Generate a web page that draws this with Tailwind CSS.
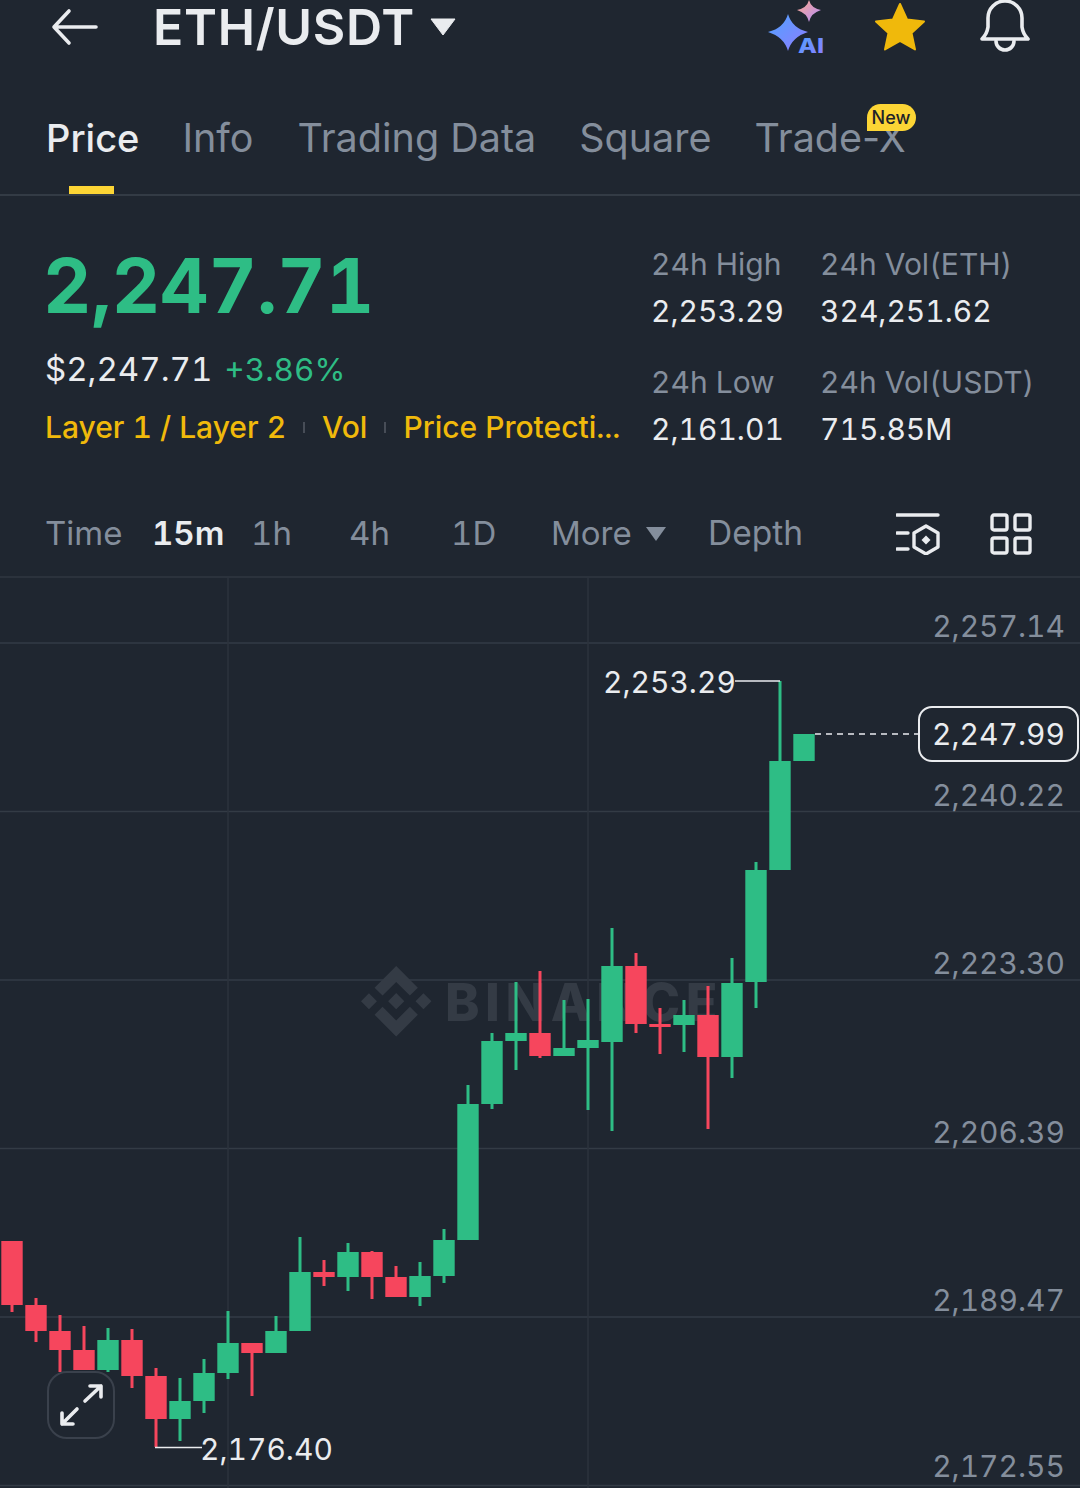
<!DOCTYPE html>
<html lang="en">
<head>
    <meta charset="UTF-8">
    <title>ETH/USDT</title>
    <script src="https://cdn.jsdelivr.net/npm/@tailwindcss/browser@4"></script>
</head>
<body class="bg-[#1f2630] font-['Inter',sans-serif] text-[#eaecef]">
<div class="w-[1080px] h-[1488px] overflow-hidden">
    <!-- Header -->
    <header class="flex items-center h-[54px] pl-[51px]">
        <svg class="w-[48px] h-[38px]" viewBox="0 0 48 38" fill="none" stroke="#eaecef" stroke-width="3.6" stroke-linecap="round" stroke-linejoin="round"><path d="M45 19H3M18 3L3 19l15 16"/></svg>
        <h1 class="ml-[54px] text-[50px] leading-[54px] font-semibold tracking-[0.7px]">ETH/USDT</h1>
        <svg class="ml-[15px] w-[26px] h-[18px]" viewBox="0 0 26 18"><path d="M1 1h24L13 17z" fill="#eaecef" stroke="#eaecef" stroke-linejoin="round"/></svg>
        <svg class="ml-[311px] w-[60px] h-[54px] overflow-visible" viewBox="0 0 60 54">
            <defs>
                <linearGradient id="aiBlue" x1="0" y1="0" x2="1" y2="1"><stop offset="0" stop-color="#4fa4ff"/><stop offset="1" stop-color="#8f7bff"/></linearGradient>
                <linearGradient id="aiPink" x1="0" y1="0" x2="1" y2="1"><stop offset="0" stop-color="#ffa98a"/><stop offset="1" stop-color="#b08cff"/></linearGradient>
            </defs>
            <path d="M21 14q4 14 20 18q-16 5-20 19q-4-14-20-19q16-4 20-18z" fill="url(#aiBlue)"/>
            <path d="M42 0q2 8 12 10q-10 3-12 12q-2-9-12-12q10-2 12-10z" fill="url(#aiPink)"/>
            <text x="31" y="53" font-family="Inter" font-weight="800" font-size="20" textLength="26" lengthAdjust="spacingAndGlyphs" fill="url(#aiBlue)">AI</text>
        </svg>
        <svg class="ml-[47px] w-[52px] h-[52px]" viewBox="0 0 52 52"><path d="M26 3l7 15.500 17 2-12.500 11.500 3.500 16.500-15-8.500-15 8.500 3.500-16.500L2 20.500l17-2z" fill="#f0b90b" stroke="#f0b90b" stroke-width="2" stroke-linejoin="round"/></svg>
        <svg class="ml-[53px] w-[52px] h-[54px]" viewBox="0 0 52 54" fill="none" stroke="#eaecef" stroke-width="3.600" stroke-linecap="round" stroke-linejoin="round"><path d="M3 39q5-5 6-12v-9a17 17 0 0 1 34 0v9q1 7 6 12z"/><path d="M17 41a9 9 0 0 0 18 0"/></svg>
    </header>

    <!-- Tabs -->
    <nav class="relative flex gap-[44px] h-[142px] pt-[58px] pl-[46px] border-b-2 border-[#333b45] text-[39.5px] leading-[52px] text-[#848e9c]">
        <div class="relative h-[82px] text-[38px] font-medium text-[#eaecef]">Price<div class="absolute left-[23px] bottom-0 w-[45px] h-[8px] bg-[#fcd535]"></div></div>
        <div class="-ml-[1px]">Info</div>
        <div>Trading Data</div>
        <div class="-ml-[1px]">Square</div>
        <div class="relative -ml-[1px]">Trade-X
            <span class="absolute left-[112px] top-[-8px] w-[49px] h-[27px] rounded-full rounded-bl-[6px] bg-[#fcd535] text-[#1e2329] text-[18px] leading-[27px] font-medium text-center">New</span>
        </div>
    </nav>

    <!-- Price summary -->
    <section class="flex h-[271px] pl-[44px] pt-[44px] tabular-nums">
        <div class="w-[607px]">
            <div class="text-[75px] leading-[92px] font-bold text-[#2ebd85] -ml-[1px]">2,247.71</div>
            <div class="flex items-center mt-[16px] h-[44px] text-[33px] ml-[1px]">
                <span>$2,247.71</span>
                <span class="ml-[12px] text-[31.5px] text-[#2ebd85]">+3.86%</span>
            </div>
            <div class="flex items-center mt-[11px] h-[48px] text-[30px] font-medium text-[#f0b90b] whitespace-nowrap ml-[1px]">
                <span>Layer 1 / Layer 2</span>
                <span class="mx-[17px] w-[2px] h-[11px] bg-[#474d57]"></span>
                <span>Vol</span>
                <span class="mx-[17px] w-[2px] h-[11px] bg-[#474d57]"></span>
                <span>Price Protecti...</span>
            </div>
        </div>
        <div class="grid grid-cols-[169px_auto] grid-rows-[47px_71px_47px_47px] text-[30px] leading-[47px] mt-[1px]">
            <div class="text-[#848e9c]">24h High</div><div class="text-[#848e9c]">24h Vol(ETH)</div>
            <div>2,253.29</div><div>324,251.62</div>
            <div class="text-[#848e9c] self-end">24h Low</div><div class="text-[#848e9c] self-end">24h Vol(USDT)</div>
            <div>2,161.01</div><div>715.85M</div>
        </div>
    </section>

    <!-- Timeframes -->
    <div class="flex items-center h-[111px] pl-[45px] pt-[24px] border-b-2 border-[#2b323c] text-[33px] text-[#848e9c] tabular-nums">
        <span class="w-[107px]">Time</span>
        <span class="w-[99px] text-[#eaecef] font-semibold">15m</span>
        <span class="w-[98px]">1h</span>
        <span class="w-[102px]">4h</span>
        <span class="w-[100px]">1D</span>
        <span class="w-[95px]">More</span>
        <svg class="w-[20px] h-[14px]" viewBox="0 0 20 14"><path d="M0 0h20L10 14z" fill="#848e9c"/></svg>
        <span class="ml-[42px] w-[188px] text-[33.5px]">Depth</span>
        <svg class="w-[44px] h-[42px]" viewBox="0 0 44 42" fill="none" stroke="#eaecef" stroke-width="3.400" stroke-linecap="round" stroke-linejoin="round">
            <path d="M1 2h41M1 20h11M1 36h11"/>
            <path d="M30 13l12 7v14l-12 7-12-7V20z"/>
            <path d="M30 22.500l4.500 4.500-4.500 4.500-4.500-4.500z" fill="#eaecef" stroke="none"/>
        </svg>
        <svg class="ml-[50px] w-[42px] h-[42px]" viewBox="0 0 42 42" fill="none" stroke="#eaecef" stroke-width="3.400" stroke-linejoin="round">
            <rect x="2" y="2" width="15" height="15" rx="2"/><rect x="25" y="2" width="15" height="15" rx="2"/>
            <rect x="2" y="25" width="15" height="15" rx="2"/><rect x="25" y="25" width="15" height="15" rx="2"/>
        </svg>
    </div>

    <!-- Chart -->
    <div class="relative h-[910px] tabular-nums">
        <svg id="chart" class="absolute inset-0 w-[1080px] h-[910px]" viewBox="0 578 1080 910">
            <g stroke="#333b45" stroke-width="1.500">
                <path d="M0 643H1080M0 811.500H1080M0 980H1080M0 1148.500H1080M0 1317H1080M0 1485.500H1080"/>
                <path d="M228 578V1488M588 578V1488" stroke="#2c333d"/>
            </g>
            <g transform="translate(361 966) scale(0.5560)" fill="#343b45">
                <path d="M38.730 53.200l24.590-24.580 24.600 24.600 14.300-14.310L63.320 0 24.430 38.900zM0 63.310l14.300-14.300 14.300 14.300-14.300 14.300zM38.730 73.410L63.320 97.990l24.600-24.600 14.310 14.290L63.320 126.610 24.430 87.720zM98.040 63.310l14.300-14.300 14.300 14.300-14.300 14.300zM77.830 63.300L63.320 48.780 48.810 63.280l14.510 14.520z"/>
            </g>
            <text x="445" y="1021" font-family="Inter" font-weight="800" font-size="52" letter-spacing="5.500" fill="#343b45">BINANCE</text>
            <g id="candles"></g>
            <path d="M735 681H780M155 1447.500H202" stroke="#eaecef" stroke-width="1.500" fill="none"/>
            <path d="M815 734H918" stroke="#eaecef" stroke-width="1.500" stroke-dasharray="6 5" fill="none"/>
        </svg>

        <!-- Axis labels -->
        <div class="absolute right-[15px] top-[26px] text-[30px] leading-[44px] text-[#848e9c]">2,257.14</div>
        <div class="absolute right-[15px] top-[195px] text-[30px] leading-[44px] text-[#848e9c]">2,240.22</div>
        <div class="absolute right-[15px] top-[363px] text-[30px] leading-[44px] text-[#848e9c]">2,223.30</div>
        <div class="absolute right-[15px] top-[532px] text-[30px] leading-[44px] text-[#848e9c]">2,206.39</div>
        <div class="absolute right-[15px] top-[700px] text-[30px] leading-[44px] text-[#848e9c]">2,189.47</div>
        <div class="absolute right-[15px] top-[866px] text-[30px] leading-[44px] text-[#848e9c]">2,172.55</div>

        <div class="absolute left-[918px] top-[128px] w-[161px] h-[56px] rounded-[14px] border-2 border-[#eaecef] bg-[#1f2630] text-[30px] leading-[52px] text-center">2,247.99</div>
        <div class="absolute left-[603px] top-[82px] text-[30px] leading-[44px]">2,253.29</div>
        <div class="absolute left-[200px] top-[849px] text-[30px] leading-[44px]">2,176.40</div>

        <div class="absolute left-[47px] top-[793px] w-[68px] h-[68px] rounded-[20px] border-2 border-[#3a414c] flex items-center justify-center">
            <svg class="w-[46px] h-[46px]" viewBox="0 0 46 46" fill="none" stroke="#eaecef" stroke-width="3.600" stroke-linecap="round" stroke-linejoin="round">
                <path d="M27 19L43 4M32 4h11v11M19 27L4 42M4 31v11h11"/>
            </svg>
        </div>
    </div>
</div>

<script>
    // cx, wickTop, wickBottom, bodyTop, bodyBottom, up
    const candles = [
        [12, 1241, 1312, 1241, 1305, 0], [36, 1298, 1342, 1305, 1331, 0], [60, 1315, 1372, 1331, 1350, 0],
        [84, 1326, 1370, 1350, 1370, 0], [108, 1328, 1372, 1340, 1370, 1], [132, 1329, 1388, 1340, 1376, 0],
        [156, 1368, 1447, 1376, 1419, 0], [180, 1378, 1441, 1401, 1419, 1], [204, 1359, 1413, 1373, 1401, 1],
        [228, 1311, 1379, 1343, 1373, 1], [252, 1343, 1396, 1343, 1353, 0], [276, 1316, 1353, 1331, 1353, 1],
        [300, 1237, 1331, 1272, 1331, 1], [324, 1260, 1286, 1272, 1277, 0], [348, 1243, 1291, 1252, 1277, 1],
        [372, 1251, 1299, 1252, 1277, 0], [396, 1266, 1297, 1277, 1297, 0], [420, 1262, 1306, 1276, 1297, 1],
        [444, 1229, 1283, 1240, 1276, 1], [468, 1085, 1240, 1104, 1240, 1], [492, 1033, 1109, 1041, 1104, 1],
        [516, 982, 1070, 1033, 1041, 1], [540, 971, 1058, 1033, 1056, 0], [564, 1000, 1056, 1048, 1056, 1],
        [588, 999, 1110, 1040, 1048, 1], [612, 928, 1131, 966, 1042, 1], [636, 953, 1033, 966, 1024, 0],
        [660, 1008, 1054, 1024, 1027, 0], [684, 1000, 1052, 1015, 1025, 1], [708, 986, 1129, 1015, 1057, 0],
        [732, 958, 1078, 983, 1057, 1], [756, 862, 1008, 870, 982, 1], [780, 681, 870, 761, 870, 1],
        [804, 734, 761, 734, 761, 1]
    ];
    document.getElementById('candles').innerHTML = candles.map(([x, wt, wb, bt, bb, up]) => {
        const color = up ? '#2ebd85' : '#f6465d';
        return `<rect x="${x - 1.5}" y="${wt}" width="3" height="${wb - wt}" fill="${color}"/>` +
               `<rect x="${x - 10.7}" y="${bt}" width="21.4" height="${bb - bt}" fill="${color}"/>`;
    }).join('');
</script>
</body>
</html>
